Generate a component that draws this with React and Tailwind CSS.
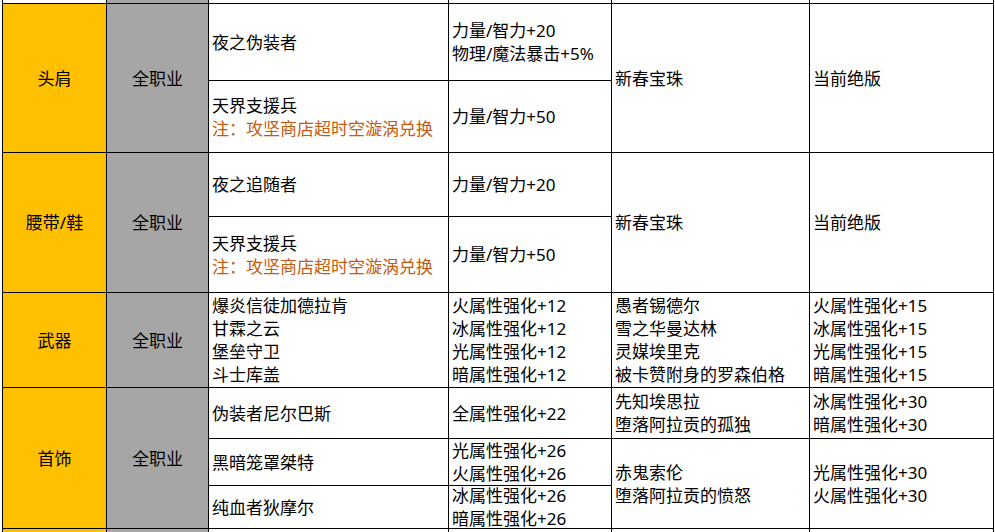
import React from 'react';

const NOTE = '注：攻坚商店超时空漩涡兑换';

// one table cell; lines are stacked and vertically centred like the sheet
function Cell({ className = '', lines = [], note, center = false, bg = 'bg-white' }) {
  return (
    <div
      className={`flex flex-col justify-center ${center ? 'items-center' : 'items-start pl-[3px]'} ${bg} ${className}`}
    >
      {lines.map((t) => (
        <span key={t} className="whitespace-nowrap">{t}</span>
      ))}
      {note && <span className="whitespace-nowrap text-[#c55a11]">{note}</span>}
    </div>
  );
}

export default function App() {
  return (
    <div className="h-[532px] w-[995px] overflow-hidden bg-white pl-[2px] font-['Noto_Sans','Noto_Sans_CJK_SC',sans-serif] text-[17px] leading-[23px] text-black">
      <div className="grid w-fit grid-cols-[103px_101px_239px_162px_197px_183px] grid-rows-[3px_76px_71px_63px_75px_94px_50px_46px_42px_40px] gap-px bg-black px-px pb-px">
        {/* tail of the row above */}
        <div className="col-start-1 row-start-1 bg-white" />
        <div className="col-start-2 row-start-1 bg-[#a6a6a6]" />
        <div className="col-start-3 row-start-1 bg-white" />
        <div className="col-start-4 row-start-1 bg-white" />
        <div className="col-start-5 row-start-1 bg-white" />
        <div className="col-start-6 row-start-1 bg-white" />

        {/* 头肩 */}
        <Cell center bg="bg-[#ffc000]" className="col-start-1 row-start-2 row-span-2" lines={['头肩']} />
        <Cell center bg="bg-[#a6a6a6]" className="col-start-2 row-start-2 row-span-2" lines={['全职业']} />
        <Cell className="col-start-3 row-start-2" lines={['夜之伪装者']} />
        <Cell className="col-start-3 row-start-3" lines={['天界支援兵']} note={NOTE} />
        <Cell className="col-start-4 row-start-2" lines={['力量/智力+20', '物理/魔法暴击+5%']} />
        <Cell className="col-start-4 row-start-3" lines={['力量/智力+50']} />
        <Cell className="col-start-5 row-start-2 row-span-2" lines={['新春宝珠']} />
        <Cell className="col-start-6 row-start-2 row-span-2" lines={['当前绝版']} />

        {/* 腰带/鞋 */}
        <Cell center bg="bg-[#ffc000]" className="col-start-1 row-start-4 row-span-2" lines={['腰带/鞋']} />
        <Cell center bg="bg-[#a6a6a6]" className="col-start-2 row-start-4 row-span-2" lines={['全职业']} />
        <Cell className="col-start-3 row-start-4" lines={['夜之追随者']} />
        <Cell className="col-start-3 row-start-5" lines={['天界支援兵']} note={NOTE} />
        <Cell className="col-start-4 row-start-4" lines={['力量/智力+20']} />
        <Cell className="col-start-4 row-start-5" lines={['力量/智力+50']} />
        <Cell className="col-start-5 row-start-4 row-span-2" lines={['新春宝珠']} />
        <Cell className="col-start-6 row-start-4 row-span-2" lines={['当前绝版']} />

        {/* 武器 */}
        <Cell center bg="bg-[#ffc000]" className="col-start-1 row-start-6" lines={['武器']} />
        <Cell center bg="bg-[#a6a6a6]" className="col-start-2 row-start-6" lines={['全职业']} />
        <Cell className="col-start-3 row-start-6" lines={['爆炎信徒加德拉肯', '甘霖之云', '堡垒守卫', '斗士库盖']} />
        <Cell className="col-start-4 row-start-6" lines={['火属性强化+12', '冰属性强化+12', '光属性强化+12', '暗属性强化+12']} />
        <Cell className="col-start-5 row-start-6" lines={['愚者锡德尔', '雪之华曼达林', '灵媒埃里克', '被卡赞附身的罗森伯格']} />
        <Cell className="col-start-6 row-start-6" lines={['火属性强化+15', '冰属性强化+15', '光属性强化+15', '暗属性强化+15']} />

        {/* 首饰 */}
        <Cell center bg="bg-[#ffc000]" className="col-start-1 row-start-7 row-span-3" lines={['首饰']} />
        <Cell center bg="bg-[#a6a6a6]" className="col-start-2 row-start-7 row-span-3" lines={['全职业']} />
        <Cell className="col-start-3 row-start-7" lines={['伪装者尼尔巴斯']} />
        <Cell className="col-start-3 row-start-8" lines={['黑暗笼罩桀特']} />
        <Cell className="col-start-3 row-start-9" lines={['纯血者狄摩尔']} />
        <Cell className="col-start-4 row-start-7" lines={['全属性强化+22']} />
        <Cell className="col-start-4 row-start-8" lines={['光属性强化+26', '火属性强化+26']} />
        <Cell className="col-start-4 row-start-9" lines={['冰属性强化+26', '暗属性强化+26']} />
        <Cell className="col-start-5 row-start-7" lines={['先知埃思拉', '堕落阿拉贡的孤独']} />
        <Cell className="col-start-5 row-start-8 row-span-2" lines={['赤鬼索伦', '堕落阿拉贡的愤怒']} />
        <Cell className="col-start-6 row-start-7" lines={['冰属性强化+30', '暗属性强化+30']} />
        <Cell className="col-start-6 row-start-8 row-span-2" lines={['光属性强化+30', '火属性强化+30']} />

        {/* start of the next row, cut off by the window */}
        <div className="col-start-1 row-start-10 bg-[#ffc000]" />
        <div className="col-start-2 row-start-10 bg-[#a6a6a6]" />
        <div className="col-start-3 row-start-10 bg-white" />
        <div className="col-start-4 row-start-10 bg-white" />
        <div className="col-start-5 row-start-10 bg-white" />
        <div className="col-start-6 row-start-10 bg-white" />
      </div>
    </div>
  );
}
